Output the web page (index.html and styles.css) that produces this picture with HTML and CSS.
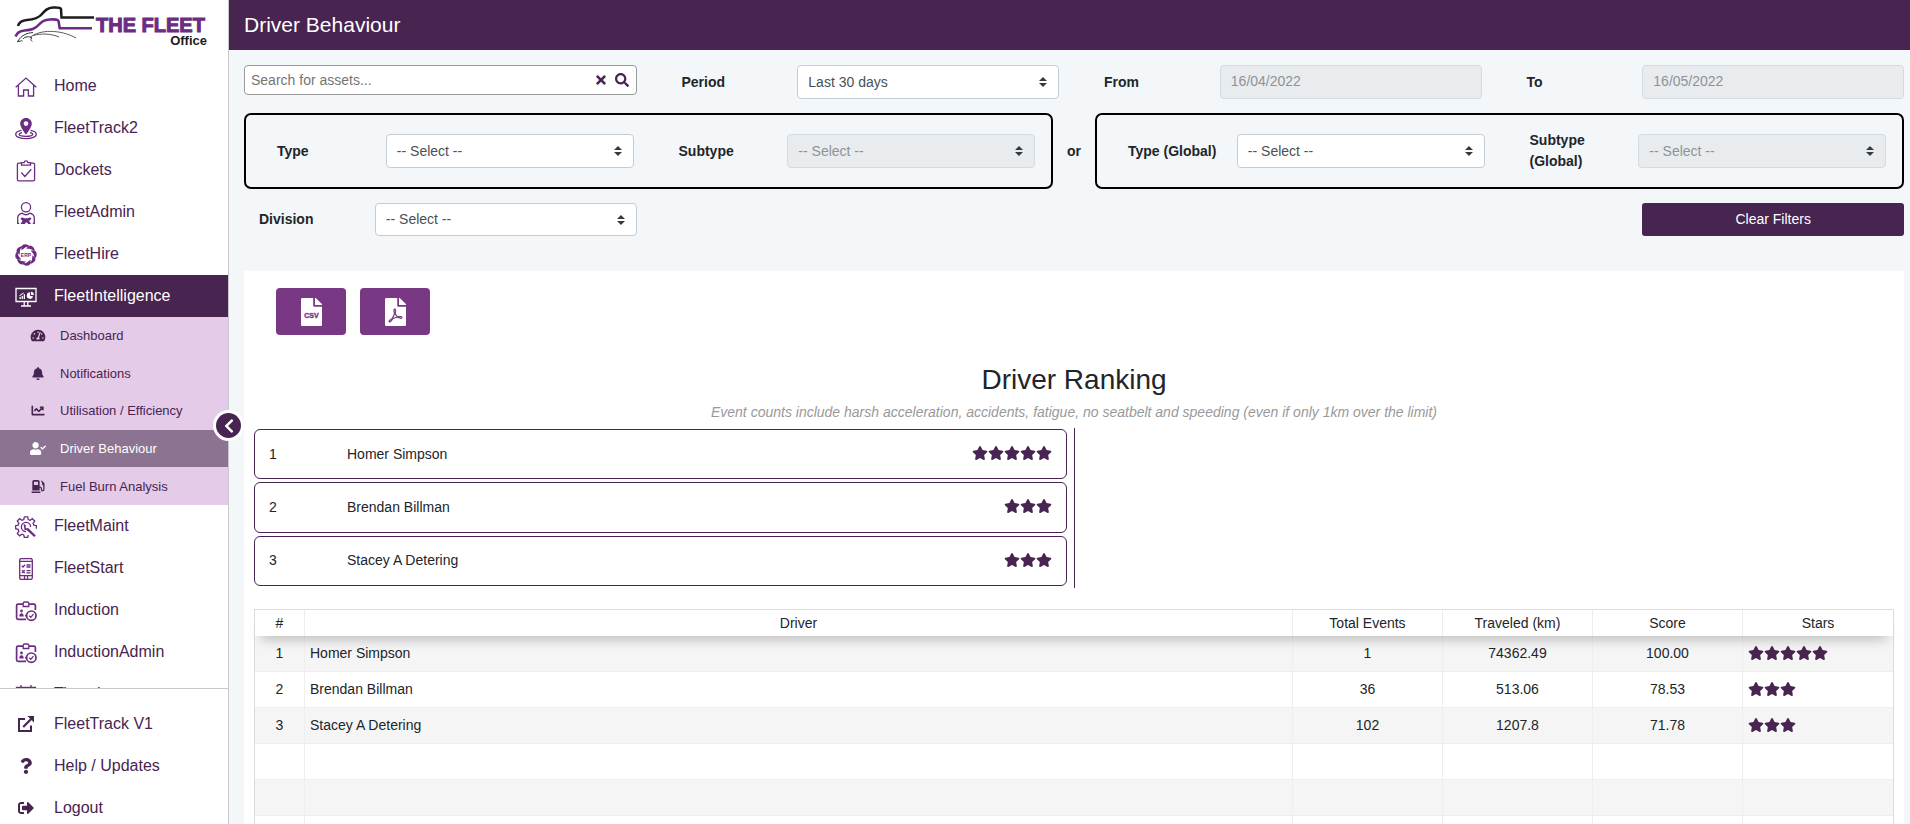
FILE: index.html
```html
<!DOCTYPE html>
<html lang="en">
<head>
<meta charset="utf-8">
<meta name="viewport" content="width=device-width, initial-scale=1">
<title>Driver Behaviour</title>
<link rel="stylesheet" href="styles.css">
</head>
<body>
<svg class="sprite" aria-hidden="true">
  <symbol id="i-star" viewBox="0 0 576 512"><path d="M259.3 17.8L194 150.2 47.9 171.5c-26.2 3.8-36.7 36.1-17.7 54.6l105.7 103-25 145.5c-4.5 26.3 23.2 46 46.4 33.7L288 439.6l130.7 68.7c23.2 12.2 50.9-7.4 46.4-33.7l-25-145.5 105.7-103c19-18.5 8.5-50.8-17.7-54.6L382 150.2 316.7 17.8c-11.7-23.6-45.6-23.9-57.4 0z"/></symbol>
  <symbol id="i-times" viewBox="0 0 352 512"><path d="M242.72 256l100.07-100.07c12.28-12.28 12.28-32.19 0-44.48l-22.24-22.24c-12.28-12.28-32.19-12.28-44.48 0L176 189.28 75.93 89.21c-12.28-12.28-32.19-12.28-44.48 0L9.21 111.45c-12.28 12.28-12.28 32.19 0 44.48L109.28 256 9.21 356.07c-12.28 12.28-12.28 32.19 0 44.48l22.24 22.24c12.28 12.28 32.2 12.28 44.48 0L176 322.72l100.07 100.07c12.28 12.28 32.2 12.28 44.48 0l22.24-22.24c12.28-12.28 12.28-32.19 0-44.48L242.72 256z"/></symbol>
  <symbol id="i-search" viewBox="0 0 512 512"><path d="M505 442.7L405.3 343c-4.5-4.5-10.6-7-17-7H372c27.6-35.3 44-79.7 44-128C416 93.1 322.9 0 208 0S0 93.1 0 208s93.1 208 208 208c48.3 0 92.7-16.4 128-44v16.3c0 6.4 2.5 12.5 7 17l99.7 99.7c9.4 9.4 24.6 9.4 33.9 0l28.3-28.3c9.4-9.4 9.4-24.6.1-34zM208 336c-70.7 0-128-57.2-128-128 0-70.7 57.2-128 128-128 70.7 0 128 57.2 128 128 0 70.7-57.2 128-128 128z"/></symbol>
  <symbol id="i-gauge" viewBox="0 0 576 512"><path d="M288 32C128.94 32 0 160.94 0 320c0 52.8 14.25 102.26 39.06 144.8 5.61 9.62 16.3 15.2 27.44 15.2h443c11.14 0 21.83-5.58 27.44-15.2C561.75 422.26 576 372.8 576 320c0-159.06-128.94-288-288-288zm0 64c14.71 0 26.58 10.13 30.32 23.65-1.11 2.26-2.64 4.23-3.45 6.67l-9.22 27.67c-5.13 3.49-10.97 6.01-17.64 6.01-17.67 0-32-14.33-32-32S270.33 96 288 96zM96 384c-17.67 0-32-14.33-32-32s14.33-32 32-32 32 14.33 32 32-14.33 32-32 32zm48-160c-17.67 0-32-14.33-32-32s14.33-32 32-32 32 14.33 32 32-14.33 32-32 32zm246.77-72.41l-61.33 184C343.13 347.33 352 364.54 352 384c0 11.72-3.38 22.55-8.88 32H232.88c-5.5-9.45-8.88-20.28-8.88-32 0-33.94 26.5-61.43 59.9-63.59l61.34-184.01c4.17-12.56 17.73-19.45 30.36-15.17 12.57 4.19 19.35 17.79 15.17 30.36zm14.66 57.2l15.52-46.55c3.47-1.29 7.13-2.23 11.05-2.23 17.67 0 32 14.33 32 32s-14.33 32-32 32c-11.38-.01-20.89-6.28-26.57-15.22zM480 384c-17.67 0-32-14.33-32-32s14.33-32 32-32 32 14.33 32 32-14.33 32-32 32z"/></symbol>
  <symbol id="i-bell" viewBox="0 0 448 512"><path d="M224 512c35.32 0 63.97-28.65 63.97-64H160.03c0 35.35 28.65 64 63.97 64zm215.39-149.71c-19.32-20.76-55.47-51.99-55.47-154.29 0-77.7-54.48-139.9-127.94-155.16V32c0-17.67-14.32-32-31.98-32s-31.98 14.33-31.98 32v20.84C118.56 68.1 64.08 130.3 64.08 208c0 102.3-36.15 133.53-55.47 154.29-6 6.45-8.66 14.16-8.61 21.71.11 16.4 12.98 32 32.1 32h383.8c19.12 0 32-15.6 32.1-32 .05-7.55-2.61-15.27-8.61-21.71z"/></symbol>
  <symbol id="i-chart" viewBox="0 0 512 512"><path d="M496 384H64V80c0-8.84-7.16-16-16-16H16C7.16 64 0 71.16 0 80v336c0 17.67 14.33 32 32 32h464c8.84 0 16-7.16 16-16v-32c0-8.84-7.16-16-16-16zM464 96H345.94c-21.38 0-32.09 25.85-16.97 40.97l32.4 32.4L288 242.75l-73.37-73.37c-12.5-12.5-32.76-12.5-45.25 0l-68.69 68.69c-6.25 6.25-6.25 16.38 0 22.63l22.62 22.62c6.25 6.25 16.38 6.25 22.63 0L192 237.25l73.37 73.37c12.5 12.5 32.76 12.5 45.25 0l96-96 32.4 32.4c15.12 15.12 40.97 4.41 40.97-16.97V112c.01-8.84-7.15-16-15.99-16z"/></symbol>
  <symbol id="i-usercheck" viewBox="0 0 640 512"><path d="M224 256c70.7 0 128-57.3 128-128S294.7 0 224 0 96 57.3 96 128s57.3 128 128 128zm89.6 32h-16.7c-22.2 10.2-46.9 16-72.9 16s-50.6-5.8-72.9-16h-16.7C60.2 288 0 348.2 0 422.4V464c0 26.5 21.5 48 48 48h352c26.5 0 48-21.5 48-48v-41.6c0-74.2-60.2-134.4-134.4-134.4zM636.6 159.6l-26-26.3c-4-4-10.4-4-14.4 0L498 231.2l-42.6-42.9c-4-4-10.4-4-14.4 0l-26.2 26.1c-4 4-4 10.4 0 14.4l75.6 76.2c4 4 10.4 4 14.4 0l131.6-130.8c4-4 4-10.6.2-14.6z"/></symbol>
  <symbol id="i-pump" viewBox="0 0 512 512"><path d="M336 448H16c-8.8 0-16 7.2-16 16v32c0 8.8 7.2 16 16 16h320c8.8 0 16-7.2 16-16v-32c0-8.8-7.2-16-16-16zm157.2-340.7l-81-81c-6.2-6.2-16.4-6.2-22.6 0l-11.3 11.3c-6.2 6.2-6.2 16.4 0 22.6L416 97.9V160c0 28.1 20.9 51.3 48 55.2V376c0 13.2-10.8 24-24 24s-24-10.8-24-24v-32c0-48.6-39.4-88-88-88h-8V64c0-35.3-28.7-64-64-64H96C60.7 0 32 28.7 32 64v352h288V304h8c22.1 0 40 17.9 40 40v27.8c0 37.7 27 72 64.5 75.9 43 4.3 79.5-29.5 79.5-71.7V152.6c0-17-6.8-33.3-18.8-45.3zM256 192H96V64h160v128z"/></symbol>
  <symbol id="i-question" viewBox="0 0 384 512"><path d="M202.021 0C122.202 0 70.503 32.703 29.914 91.026c-7.363 10.58-5.093 25.086 5.178 32.874l43.138 32.709c10.373 7.865 25.132 6.026 33.253-4.148 25.049-31.381 43.63-49.449 82.757-49.449 30.764 0 68.816 19.799 68.816 49.631 0 22.552-18.617 34.134-48.993 51.164-35.423 19.86-82.299 44.576-82.299 106.405V320c0 13.255 10.745 24 24 24h72.471c13.255 0 24-10.745 24-24v-5.773c0-42.86 125.268-44.645 125.268-160.627C377.504 66.256 286.902 0 202.021 0zM192 373.459c-38.196 0-69.271 31.075-69.271 69.271 0 38.195 31.075 69.27 69.271 69.27s69.271-31.075 69.271-69.271-31.075-69.27-69.271-69.27z"/></symbol>
  <symbol id="i-logout" viewBox="0 0 512 512"><path d="M497 273L329 441c-15 15-41 4.5-41-17v-96H152c-13.3 0-24-10.7-24-24v-96c0-13.3 10.7-24 24-24h136V88c0-21.4 25.9-32 41-17l168 168c9.3 9.4 9.3 24.6 0 34zM192 436v-40c0-6.6-5.4-12-12-12H96c-17.7 0-32-14.3-32-32V160c0-17.7 14.3-32 32-32h84c6.6 0 12-5.4 12-12V76c0-6.6-5.4-12-12-12H96c-53 0-96 43-96 96v192c0 53 43 96 96 96h84c6.6 0 12-5.4 12-12z"/></symbol>
  <symbol id="i-external" viewBox="0 0 16 16"><path d="M7 2.900H1v12.100h12V9.500" fill="none" stroke="currentColor" stroke-width="2"/><path d="M5.200 11L13.400 2.800" fill="none" stroke="currentColor" stroke-width="2.200"/><path d="M9.400 0H16v6.600z"/></symbol>
  <symbol id="i-chevron" viewBox="0 0 320 512"><path d="M34.52 239.03L228.87 44.69c9.37-9.37 24.57-9.37 33.94 0l22.67 22.67c9.36 9.36 9.37 24.52.04 33.9L131.49 256l154.02 154.75c9.34 9.38 9.32 24.54-.04 33.9l-22.67 22.67c-9.37 9.37-24.57 9.37-33.94 0L34.52 272.97c-9.37-9.37-9.37-24.57 0-33.94z"/></symbol>
  <symbol id="i-pdf" viewBox="0 0 384 512"><path d="M181.9 256.1c-5-16-4.9-46.9-2-46.9 8.4 0 7.6 36.9 2 46.9zm-1.7 47.2c-7.7 20.2-17.3 43.3-28.4 62.7 18.3-7 39-17.2 62.9-21.9-12.7-9.6-24.9-23.4-34.5-40.8zM86.1 428.1c0 .8 13.2-5.4 34.9-40.2-6.7 6.3-29.1 24.5-34.9 40.2zM248 160h136v328c0 13.3-10.7 24-24 24H24c-13.3 0-24-10.7-24-24V24C0 10.7 10.7 0 24 0h200v136c0 13.2 10.8 24 24 24zm-8 171.8c-20-12.2-33.3-29-42.7-53.8 4.5-18.5 11.6-46.6 6.2-64.2-4.7-29.4-42.4-26.5-47.8-6.8-5 18.3-.4 44.1 8.1 77-11.6 27.6-28.7 64.6-40.8 85.8-.1 0-.1.1-.2.1-27.1 13.9-73.6 44.5-54.5 68 5.6 6.9 16 10 21.5 10 17.9 0 35.7-18 61.1-61.8 25.8-8.5 54.1-19.1 79-23.2 21.7 11.8 47.1 19.5 64 19.5 29.2 0 31.2-32 19.7-43.4-13.9-13.6-54.3-9.7-73.6-7.2zM377 105L279 7c-4.5-4.5-10.6-7-17-7h-6v128h128v-6.1c0-6.3-2.5-12.4-7-16.9zm-74.1 255.3c4.1-2.7-2.5-11.9-42.8-9 37.1 15.8 42.8 9 42.8 9z"/></symbol>
  <symbol id="i-home" viewBox="0 0 22 22"><path d="M.7 11.2L11 2l10.3 9.2M3.4 9v11h5.2v-6h4.8v6h5.2V9" class="line"/></symbol>
  <symbol id="i-track" viewBox="0 0 22 22"><path d="M11 0C7.7 0 5.2 2.500 5.200 5.700 5.200 9.500 11 16.500 11 16.500s5.800-7 5.800-10.800C16.800 2.500 14.300 0 11 0zm0 8a2.400 2.400 0 1 1 0-4.800A2.400 2.400 0 0 1 11 8z"/><path d="M6.500 12.300C3 12.900.7 14.300.7 16.200c0 2.600 4.600 4.500 10.300 4.500s10.300-1.900 10.300-4.500c0-1.900-2.300-3.300-5.800-3.900M7 14.600c-1.700.3-2.800.9-2.800 1.700 0 1.200 3 2 6.800 2s6.800-.8 6.800-2c0-.8-1.100-1.400-2.800-1.700" class="line"/></symbol>
  <symbol id="i-docket" viewBox="0 0 22 22"><path d="M6.500 3.200H3.700a1.300 1.300 0 0 0-1.300 1.300v15a1.300 1.300 0 0 0 1.300 1.300h14.600a1.300 1.300 0 0 0 1.300-1.300v-15a1.300 1.300 0 0 0-1.300-1.300h-2.800M6.500 5.200V2.600h2.600C9.300 1.400 10 .9 11 .9s1.700.5 1.900 1.700h2.600v2.600zM6.300 12.500l3.600 4 6.400-7.200" class="line"/></symbol>
  <symbol id="i-admin" viewBox="0 0 22 22"><circle cx="11" cy="5.300" r="4.600" class="line"/><path d="M4.200 21.300H2.700v-5.500c0-2.400 1.600-3.800 4.600-4.600 2.200 1.900 5.200 1.900 7.400 0 3 .8 4.600 2.200 4.600 4.600v5.500h-1.500" class="line"/><path d="M5.500 16l2.200-.6 1.600.9h3.400l1.600-.9 2.200.6-.6 1.600-1.500.7v1.600l1.500 1-.5 1.100h-2.300c-.2-1.100-.8-1.600-1.600-1.600s-1.400.5-1.600 1.600H6.100l-.5-1.100 1.500-1v-1.600l-1-.7z"/></symbol>
  <symbol id="i-hire" viewBox="0 0 22 22"><g id="blade"><path d="M7.400 1C10.200-.4 13.300.3 15.300 3c-2.700-.7-5-.1-7 1.900L6.500 6.300C6.300 4.300 6.500 2.500 7.400 1z"/></g><use href="#blade" transform="rotate(45 11 11)"/><use href="#blade" transform="rotate(90 11 11)"/><use href="#blade" transform="rotate(135 11 11)"/><use href="#blade" transform="rotate(180 11 11)"/><use href="#blade" transform="rotate(225 11 11)"/><use href="#blade" transform="rotate(270 11 11)"/><use href="#blade" transform="rotate(315 11 11)"/><text x="11" y="13" text-anchor="middle" class="erp">ERP</text></symbol>
  <symbol id="i-intel" viewBox="0 0 22 22"><path d="M1 2.500h20v13H1zM9.200 15.500v4M12.800 15.500v4M6 20h10" class="line"/><path d="M4.500 13v-2h1.300v2zM6.600 13v-3h1.300v3zM8.700 13V8.200H10V13zM4.300 9.600l4-3 .5.700-4 3z"/><path d="M15 6.300a3.300 3.300 0 1 0 3.200 4.200L15 9.700z"/><path d="M15.900 5.700a3.200 3.200 0 0 1 2.900 3.600l-2.900-.5z"/></symbol>
  <symbol id="i-maint" viewBox="0 0 22 22"><path d="M9.300.8h3.400l.5 2.700 1.900.8L17.400 2.700l2.300 2.300-1.600 2.300.8 1.900 2.500.5v3M9.300.8l-.5 2.700-1.900.8-2.300-1.600-2.300 2.300 1.600 2.300-.8 1.900-2.500.5v3l2.500.6.8 1.900-1.600 2.300 2.300 2.300 2.300-1.600 1.900.8.5 2.500h3.400l.5-2.500" class="line"/><path d="M15.600 11a4.600 4.600 0 1 0-4.600 4.600" class="line"/><path d="M8.500 7.500l2.600 2.300-.7 1.500 1.200 1.300 1.500-.6L20.800 19.500l-1.600 1.500-7.600-7-2 .3z"/></symbol>
  <symbol id="i-start" viewBox="0 0 22 22"><rect x="4.700" y=".6" width="12.600" height="20.800" rx="1.600" class="line"/><path d="M4.700 3.300h12.600M4.700 17.700h12.600M9.500 17.700v3.700M12.500 17.700v3.700M6.700 7.800l1.300 1.300 2-2.300M7 12.300l2.800 2.800M9.800 12.300L7 15.100M11.500 7h4M11.500 9h4M11.500 12.600h4M11.500 14.800h4" class="line"/></symbol>
  <symbol id="i-induct" viewBox="0 0 22 22"><path d="M8 4.200H3.200a1.600 1.600 0 0 0-1.600 1.600v12a1.600 1.600 0 0 0 1.600 1.600H11M14 4.200h4.800a1.600 1.600 0 0 1 1.600 1.600V10" class="line thick"/><path d="M8.200 6.500V3.400A1.400 1.400 0 0 1 9.600 2h2.800a1.400 1.400 0 0 1 1.400 1.400v3.100z" class="line"/><circle cx="16.300" cy="15.700" r="4.700" class="line thick"/><path d="M14.200 15.800l1.600 1.500 2.700-3.200" class="line"/><circle cx="6.500" cy="11" r="1.400"/><path d="M4.300 16.500c0-2.200.9-3.200 2.200-3.200s2.200 1 2.200 3.200zM10 14.800h1.500v1.700H10z"/></symbol>
  <symbol id="i-sheet" viewBox="0 0 22 22"><path d="M1.500 3.500h19v17h-19zM6 1v4M16 1v4M1.500 8h19" class="line"/></symbol>
</svg>

<div class="shell">
  <aside class="sidebar">
    <a class="logo" href="#" aria-label="The Fleet Office">
      <svg width="213" height="50" viewBox="0 0 213 50">
        <path d="M18 26c1-3.500 4-5.600 9-6 7-.6 11-1.500 14.500-5.500C45 10.500 47.500 7.800 53 7.500c4-.2 7.500.1 8 1.500l.5 8.500H94" fill="none" stroke="#1d1b1e" stroke-width="2.500"/>
        <path d="M15.500 36.500c1.500-4 4-5.500 9-6 7-.7 10.500-1.500 14-5.500 3-3.400 5.500-5.300 11-5.500 5.500-.2 8.500-.2 9 1.500l1.200 7.200H92" fill="none" stroke="#6b2c82" stroke-width="2.600"/>
        <path d="M30 37.500c9-8 30-8.500 46 .5M33 35.500c8-2.200 18-2 26 1.500" fill="none" stroke="#5d595f" stroke-width="1"/>
        <path d="M17 41.500c3.500 0 3.500-1 5.500-.5M18 41c3-5 8-8 15-8.500M23 39c2-2.500 6-3 9-1.200-1.500 1-1.500 2.200.2 3.700" fill="none" stroke="#333" stroke-width="1"/>
        <text x="96" y="32" class="logo-name">THE FLEET</text>
        <text x="207" y="45" text-anchor="end" class="logo-sub">Office</text>
      </svg>
    </a>
    <nav class="nav" aria-label="Main">
      <a class="item" href="#"><svg class="ico"><use href="#i-home"/></svg>Home</a>
      <a class="item" href="#"><svg class="ico"><use href="#i-track"/></svg>FleetTrack2</a>
      <a class="item" href="#"><svg class="ico"><use href="#i-docket"/></svg>Dockets</a>
      <a class="item" href="#"><svg class="ico"><use href="#i-admin"/></svg>FleetAdmin</a>
      <a class="item" href="#"><svg class="ico"><use href="#i-hire"/></svg>FleetHire</a>
      <a class="item active" href="#"><svg class="ico"><use href="#i-intel"/></svg>FleetIntelligence</a>
      <div class="submenu">
        <a class="subitem" href="#"><svg class="subico"><use href="#i-gauge"/></svg>Dashboard</a>
        <a class="subitem" href="#"><svg class="subico"><use href="#i-bell"/></svg>Notifications</a>
        <a class="subitem" href="#"><svg class="subico"><use href="#i-chart"/></svg>Utilisation / Efficiency</a>
        <a class="subitem current" href="#" aria-current="page"><svg class="subico"><use href="#i-usercheck"/></svg>Driver Behaviour</a>
        <a class="subitem" href="#"><svg class="subico"><use href="#i-pump"/></svg>Fuel Burn Analysis</a>
      </div>
      <a class="item" href="#"><svg class="ico"><use href="#i-maint"/></svg>FleetMaint</a>
      <a class="item" href="#"><svg class="ico"><use href="#i-start"/></svg>FleetStart</a>
      <a class="item" href="#"><svg class="ico"><use href="#i-induct"/></svg>Induction</a>
      <a class="item" href="#"><svg class="ico"><use href="#i-induct"/></svg>InductionAdmin</a>
      <a class="item" href="#"><svg class="ico"><use href="#i-sheet"/></svg>Timesheets</a>
    </nav>
    <nav class="nav-foot" aria-label="Account">
      <a class="item" href="#"><svg class="ico solid"><use href="#i-external"/></svg>FleetTrack V1</a>
      <a class="item" href="#"><svg class="ico solid"><use href="#i-question"/></svg>Help / Updates</a>
      <a class="item" href="#"><svg class="ico solid"><use href="#i-logout"/></svg>Logout</a>
    </nav>
    <button class="toggle" type="button" aria-label="Collapse menu"><svg><use href="#i-chevron"/></svg></button>
  </aside>

  <main class="main">
    <header class="topbar"><h1>Driver Behaviour</h1></header>

    <form class="filters">
      <div class="row">
        <div class="search">
          <input type="text" placeholder="Search for assets..." aria-label="Search for assets">
          <button type="button" aria-label="Clear search"><svg class="x"><use href="#i-times"/></svg></button>
          <button type="button" aria-label="Search"><svg class="mag"><use href="#i-search"/></svg></button>
        </div>
        <div class="field"><label for="period">Period</label><select id="period" class="control"><option>Last 30 days</option></select></div>
        <div class="field"><label for="from">From</label><input id="from" class="control" type="text" value="16/04/2022" disabled></div>
        <div class="field"><label for="to">To</label><input id="to" class="control" type="text" value="16/05/2022" disabled></div>
      </div>
      <div class="types">
        <div class="typebox">
          <div class="field"><label for="type">Type</label><select id="type" class="control"><option>-- Select --</option></select></div>
          <div class="field"><label for="subtype">Subtype</label><select id="subtype" class="control" disabled><option>-- Select --</option></select></div>
        </div>
        <span class="or">or</span>
        <div class="typebox">
          <div class="field"><label for="gtype">Type (Global)</label><select id="gtype" class="control"><option>-- Select --</option></select></div>
          <div class="field"><label for="gsubtype">Subtype (Global)</label><select id="gsubtype" class="control" disabled><option>-- Select --</option></select></div>
        </div>
      </div>
      <div class="row compact">
        <div class="field"><label for="division">Division</label><select id="division" class="control"><option>-- Select --</option></select></div>
        <div class="field last"><button class="clear" type="reset">Clear Filters</button></div>
      </div>
    </form>

    <section class="panel">
      <div class="exports">
        <button type="button" aria-label="Export CSV"><svg viewBox="0 0 21 28"><path d="M12.200 7.400V0H1.300C.6 0 0 .6 0 1.300v25.400c0 .7.600 1.300 1.300 1.300h18.400c.7 0 1.300-.6 1.300-1.300V8.700h-7.500c-.7 0-1.300-.6-1.300-1.300z"/><path d="M21 6.700V7h-7V0h.3c.4 0 .7.100 1 .4l5.300 5.400c.3.200.4.500.4.900z"/><text x="10.500" y="20" text-anchor="middle" class="csv">CSV</text></svg></button>
        <button type="button" aria-label="Export PDF"><svg><use href="#i-pdf"/></svg></button>
      </div>
      <h2>Driver Ranking</h2>
      <p class="note">Event counts include harsh acceleration, accidents, fatigue, no seatbelt and speeding (even if only 1km over the limit)</p>
      <ol class="ranking">
        <li><span class="pos">1</span><span class="name">Homer Simpson</span><span class="stars" role="img" aria-label="5 stars"><svg><use href="#i-star"/></svg><svg><use href="#i-star"/></svg><svg><use href="#i-star"/></svg><svg><use href="#i-star"/></svg><svg><use href="#i-star"/></svg></span></li>
        <li><span class="pos">2</span><span class="name">Brendan Billman</span><span class="stars" role="img" aria-label="3 stars"><svg><use href="#i-star"/></svg><svg><use href="#i-star"/></svg><svg><use href="#i-star"/></svg></span></li>
        <li><span class="pos">3</span><span class="name">Stacey A Detering</span><span class="stars" role="img" aria-label="3 stars"><svg><use href="#i-star"/></svg><svg><use href="#i-star"/></svg><svg><use href="#i-star"/></svg></span></li>
      </ol>
      <div class="tablewrap">
        <table>
          <colgroup><col class="c-num"><col><col class="c-val"><col class="c-val"><col class="c-val"><col class="c-val"></colgroup>
          <thead><tr><th>#</th><th>Driver</th><th>Total Events</th><th>Traveled (km)</th><th>Score</th><th>Stars</th></tr></thead>
          <tbody>
            <tr><td>1</td><td class="driver">Homer Simpson</td><td>1</td><td>74362.49</td><td>100.00</td><td><span class="stars" role="img" aria-label="5 stars"><svg><use href="#i-star"/></svg><svg><use href="#i-star"/></svg><svg><use href="#i-star"/></svg><svg><use href="#i-star"/></svg><svg><use href="#i-star"/></svg></span></td></tr>
            <tr><td>2</td><td class="driver">Brendan Billman</td><td>36</td><td>513.06</td><td>78.53</td><td><span class="stars" role="img" aria-label="3 stars"><svg><use href="#i-star"/></svg><svg><use href="#i-star"/></svg><svg><use href="#i-star"/></svg></span></td></tr>
            <tr><td>3</td><td class="driver">Stacey A Detering</td><td>102</td><td>1207.8</td><td>71.78</td><td><span class="stars" role="img" aria-label="3 stars"><svg><use href="#i-star"/></svg><svg><use href="#i-star"/></svg><svg><use href="#i-star"/></svg></span></td></tr>
            <tr><td></td><td></td><td></td><td></td><td></td><td></td></tr>
            <tr><td></td><td></td><td></td><td></td><td></td><td></td></tr>
            <tr><td></td><td></td><td></td><td></td><td></td><td></td></tr>
          </tbody>
        </table>
      </div>
    </section>
  </main>
</div>
</body>
</html>
```
FILE: styles.css
```css
:root {
  --plum: #482450;
  --violet: #6b2c82;
  --ink: #212529;
}

* { box-sizing: border-box; }

body {
  margin: 0;
  background: #f3f7fa;
  color: var(--ink);
  font: 14px/21px "Liberation Sans", Arial, sans-serif;
}

button, input, select { font: inherit; }
button { border: 0; padding: 0; cursor: pointer; }
svg { fill: currentColor; display: block; }
.sprite { position: absolute; width: 0; height: 0; }

.line { fill: none; stroke: currentColor; stroke-width: 1.3; }
.thick { stroke-width: 1.7; }
.erp { font: bold 5px "Liberation Sans", Arial, sans-serif; }

.shell { display: flex; height: 100vh; overflow: hidden; }

/* Sidebar */
.sidebar {
  position: relative;
  z-index: 2;
  flex: none;
  display: flex;
  flex-direction: column;
  width: 229px;
  background: #fff;
  border-right: 1px solid #c9c9cd;
}
.logo { flex: none; height: 65px; }
.logo-name {
  font: bold 20px "Liberation Sans", Arial, sans-serif;
  fill: var(--violet);
  stroke: var(--violet);
  stroke-width: 1;
}
.logo-sub { font: bold 13px "Liberation Sans", Arial, sans-serif; fill: #1d1b1e; }
.nav { flex: 1; min-height: 0; overflow: hidden; }
.nav-foot { flex: none; height: 136px; padding-top: 14px; border-top: 1px solid #c9c9cd; }
.item {
  display: flex;
  align-items: center;
  gap: 17px;
  height: 42px;
  padding: 0 0 2px 15px;
  color: var(--plum);
  font-size: 16px;
  text-decoration: none;
}
.item.active { background: var(--plum); color: #fff; }
.item.active .ico { color: #fff; }
.ico { flex: none; width: 22px; height: 22px; margin-top: 4px; color: var(--violet); }
.ico.solid { height: 16px; margin-top: 2px; color: var(--plum); }
.submenu {
  display: grid;
  grid-auto-rows: 1fr;
  height: 188px;
  background: #e4cbe8;
}
.subitem {
  display: flex;
  align-items: center;
  gap: 14px;
  padding-left: 30px;
  color: var(--plum);
  font-size: 13px;
  text-decoration: none;
}
.subitem.current { background: #8c7391; color: #fff; }
.subico { flex: none; width: 16px; height: 13px; }
.toggle {
  position: absolute;
  top: 410px;
  right: -16px;
  display: grid;
  place-items: center;
  width: 31px;
  height: 31px;
  border: 3px solid #fff;
  border-radius: 50%;
  background: var(--plum);
  color: #fff;
}
.toggle svg { width: 10px; height: 16px; }

/* Page */
.main { flex: 1; min-width: 0; display: flex; flex-direction: column; }
.topbar { flex: none; padding: 0 15px; background: var(--plum); color: #fff; }
.topbar h1 { margin: 0; font-size: 21px; font-weight: 400; line-height: 50px; }

.filters { flex: none; display: grid; gap: 14px; padding: 15px 6px 35px 15px; }
.row { display: grid; grid-template-columns: repeat(4, 1fr); gap: 30px; }
.field { display: grid; grid-template-columns: 1fr 2fr; align-items: center; }
.field label { padding: 0 15px; font-weight: 700; }
.field.last { grid-column: 4; }
.control {
  width: 100%;
  height: 34px;
  padding: 0 10px;
  border: 1px solid #c5cdd4;
  border-radius: 4px;
  background: #fff;
  color: #495057;
  appearance: none;
}
input.control { padding-bottom: 2px; }
select.control {
  background: #fff url("data:image/svg+xml,%3Csvg xmlns='http://www.w3.org/2000/svg' viewBox='0 0 4 5'%3E%3Cpath fill='%23343a40' d='M2 0L0 2h4zm0 5L0 3h4z'/%3E%3C/svg%3E") no-repeat right 11px center / 8px 10px;
}
.control:disabled { background-color: #e9ecef; border-color: #d5dade; color: #8d9398; opacity: 1; }
.clear {
  grid-column: 2;
  border-radius: 3px;
  background: var(--plum);
  color: #fff;
}
.compact .control, .clear { height: 33px; }
.search {
  align-self: start;
  display: flex;
  align-items: center;
  gap: 9px;
  height: 30px;
  padding: 0 7px 0 6px;
  border: 1px solid #999;
  border-radius: 4px;
  background: #fff;
}
.search input { flex: 1; min-width: 0; padding: 0; border: 0; outline: 0; background: none; }
.search input::placeholder { color: #757575; opacity: 1; }
.search button { background: none; color: var(--plum); }
.search .x { width: 10px; height: 14px; }
.search .mag { width: 14px; height: 14px; }

.types { display: grid; grid-template-columns: 1fr 42px 1fr; align-items: center; }
.typebox {
  display: grid;
  grid-template-columns: 1fr 1fr;
  gap: 30px;
  padding: 15px 16px;
  border: 2px solid #000;
  border-radius: 7px;
}
.typebox .field { min-height: 42px; }
.or { text-align: center; font-weight: 700; }

/* Ranking panel */
.panel { flex: 1; min-height: 0; overflow: hidden; margin: 0 6px 0 15px; padding: 17px 10px 0; background: #fff; }
.exports { display: flex; gap: 14px; padding-left: 22px; }
.exports button {
  display: grid;
  place-items: center;
  width: 70px;
  height: 47px;
  border-radius: 4px;
  background: #783884;
  color: #fff;
}
.exports svg { width: 21px; height: 28px; }
.csv {
  font: bold 7px "Liberation Sans", Arial, sans-serif;
  fill: #783884;
  stroke: #783884;
  stroke-width: 0.4;
}
.panel h2 { margin: 28px 0 5px; font-size: 28px; font-weight: 400; line-height: 34px; text-align: center; }
.note { margin: 0 0 5px; color: #999; font-style: italic; text-align: center; }
.ranking {
  display: grid;
  grid-auto-rows: 1fr;
  gap: 3px;
  width: calc(50% + 1px);
  height: 160px;
  margin: 0 0 21px;
  padding: 1px 7px 2px 0;
  border-right: 1px solid var(--plum);
  list-style: none;
}
.ranking li {
  display: flex;
  align-items: center;
  padding: 0 14px;
  border: 1px solid var(--plum);
  border-radius: 6px;
}
.pos { width: 78px; }
.name { flex: 1; }
.stars { display: flex; padding-bottom: 2px; color: var(--plum); }
.stars svg { width: 16px; height: 14px; }

.tablewrap { border: 1px solid #dcdcdc; }
table { width: 100%; border-collapse: separate; border-spacing: 0; table-layout: fixed; }
.c-num { width: 50px; }
.c-val { width: 150px; }
thead { position: relative; box-shadow: 0 10px 12px -6px rgba(0, 0, 0, 0.22); }
th { height: 26px; padding: 0; background: #fff; border-right: 1px solid #eee; font-weight: 400; }
td {
  height: 36px;
  padding: 0 5px;
  border-right: 1px solid #eee;
  border-bottom: 1px solid #eee;
  text-align: center;
}
th:last-child, td:last-child { border-right: 0; }
tbody tr:nth-child(odd) { background: #f5f5f5; }
td.driver { text-align: left; }
```
